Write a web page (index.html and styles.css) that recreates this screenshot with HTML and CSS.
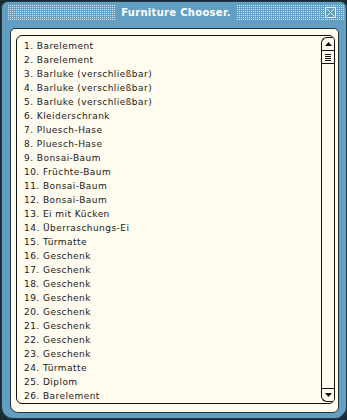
FILE: index.html
```html
<!DOCTYPE html>
<html lang="en">
<head>
    <meta charset="UTF-8">
    <title>Furniture Chooser</title>
    <link rel="stylesheet" href="styles.css">
</head>
<body>
    <div class="window">
        <div class="titlebar">
            <div class="dots"></div>
            <div class="title">Furniture Chooser.</div>
            <div class="dots dots-right">
                <svg class="close" width="11" height="11" viewBox="0 0 11 11">
                    <rect x="0.5" y="0.5" width="10" height="10" fill="none" stroke="#e8f1f6"/>
                    <path d="M2 2 L9 9 M9 2 L2 9" stroke="#e8f1f6" stroke-width="1"/>
                </svg>
            </div>
        </div>

        <div class="panel">
            <div class="listbox">
                <ul class="items">
                    <li>1. Barelement</li>
                    <li>2. Barelement</li>
                    <li>3. Barluke (verschließbar)</li>
                    <li>4. Barluke (verschließbar)</li>
                    <li>5. Barluke (verschließbar)</li>
                    <li>6. Kleiderschrank</li>
                    <li>7. Pluesch-Hase</li>
                    <li>8. Pluesch-Hase</li>
                    <li>9. Bonsai-Baum</li>
                    <li>10. Früchte-Baum</li>
                    <li>11. Bonsai-Baum</li>
                    <li>12. Bonsai-Baum</li>
                    <li>13. Ei mit Kücken</li>
                    <li>14. Überraschungs-Ei</li>
                    <li>15. Türmatte</li>
                    <li>16. Geschenk</li>
                    <li>17. Geschenk</li>
                    <li>18. Geschenk</li>
                    <li>19. Geschenk</li>
                    <li>20. Geschenk</li>
                    <li>21. Geschenk</li>
                    <li>22. Geschenk</li>
                    <li>23. Geschenk</li>
                    <li>24. Türmatte</li>
                    <li>25. Diplom</li>
                    <li>26. Barelement</li>
                </ul>
                <div class="scrollbar">
                    <div class="arrow arrow-up">
                        <svg width="7" height="4" viewBox="0 0 7 4"><path d="M3.5 0 L7 4 L0 4 Z" fill="#111"/></svg>
                    </div>
                    <div class="thumb">
                        <span></span><span></span><span></span><span></span>
                    </div>
                    <div class="track"></div>
                    <div class="arrow arrow-down">
                        <svg width="7" height="4" viewBox="0 0 7 4"><path d="M0 0 L7 0 L3.5 4 Z" fill="#111"/></svg>
                    </div>
                </div>
            </div>
        </div>
        <div class="grip"></div>
    </div>
</body>
</html>
```

FILE: styles.css
```css
body, html {
    margin: 0;
    padding: 0;
    background: #1c2b33;
    height: 100%;
    overflow: hidden;
}

.window {
    position: relative;
    box-sizing: border-box;
    width: 346px;
    height: 418px;
    margin: 1px 0 0 1px;
    background: #629fc2;
    border: 1px solid #1f3b4b;
    border-radius: 7px 7px 12px 12px;
    display: flex;
    flex-direction: column;
}

.titlebar {
    display: flex;
    align-items: center;
    height: 15px;
    padding: 3px 2px 0 6px;
    margin-bottom: 8px;
}

.dots {
    flex: 1;
    height: 15px;
    background-image:
        linear-gradient(90deg, transparent 1px, #629fc2 1px),
        linear-gradient(180deg, #d9e8f1 1px, #629fc2 1px);
    background-size: 2px 2px, 2px 2px;
}

.dots-right {
    position: relative;
}

.close {
    position: absolute;
    right: 8px;
    top: 2px;
    background: #629fc2;
    display: block;
}

.title {
    padding: 0 6px;
    color: #fff;
    font-family: "DejaVu Sans", sans-serif;
    font-weight: bold;
    font-size: 10px;
    letter-spacing: 0.3px;
    line-height: 15px;
}

.panel {
    flex: 1;
    margin: 0 7px 7px 8px;
    background: #fffbee;
    border: 1px solid #24343d;
    border-radius: 5px 5px 6px 8px;
    padding: 6px 3px 8px 5px;
    display: flex;
}

.listbox {
    flex: 1;
    border: 1px solid #111;
    border-radius: 6px;
    display: flex;
    overflow: hidden;
}

.items {
    flex: 1;
    list-style: none;
    margin: 0;
    padding: 3px 0 0 7px;
    font-family: "DejaVu Sans", sans-serif;
    font-size: 9px;
    letter-spacing: 0.45px;
    line-height: 14px;
    color: #1a1a1a;
    overflow: hidden;
}

.scrollbar {
    width: 12px;
    margin: 1px 0 1px 0;
    border: 1px solid #111;
    border-right: none;
    border-radius: 6px 0 0 6px;
    display: flex;
    flex-direction: column;
    background: #fffbee;
    overflow: hidden;
}

.arrow {
    height: 12px;
    display: flex;
    align-items: center;
    justify-content: center;
}

.arrow-up {
    border-bottom: 1px solid #111;
    border-radius: 6px 6px 0 0;
}

.arrow-down {
    border-top: 1px solid #111;
    border-radius: 0 0 6px 6px;
}

.thumb {
    height: 12px;
    border-bottom: 1px solid #111;
    display: flex;
    flex-direction: column;
    justify-content: center;
    gap: 1px;
    padding: 0 3px;
}

.thumb span {
    height: 1px;
    background: #111;
}

.track {
    flex: 1;
}

.grip {
    position: absolute;
    right: 1px;
    bottom: 1px;
    width: 0;
    height: 0;
    border-left: 5px solid transparent;
    border-bottom: 5px solid #24343d;
}
```
